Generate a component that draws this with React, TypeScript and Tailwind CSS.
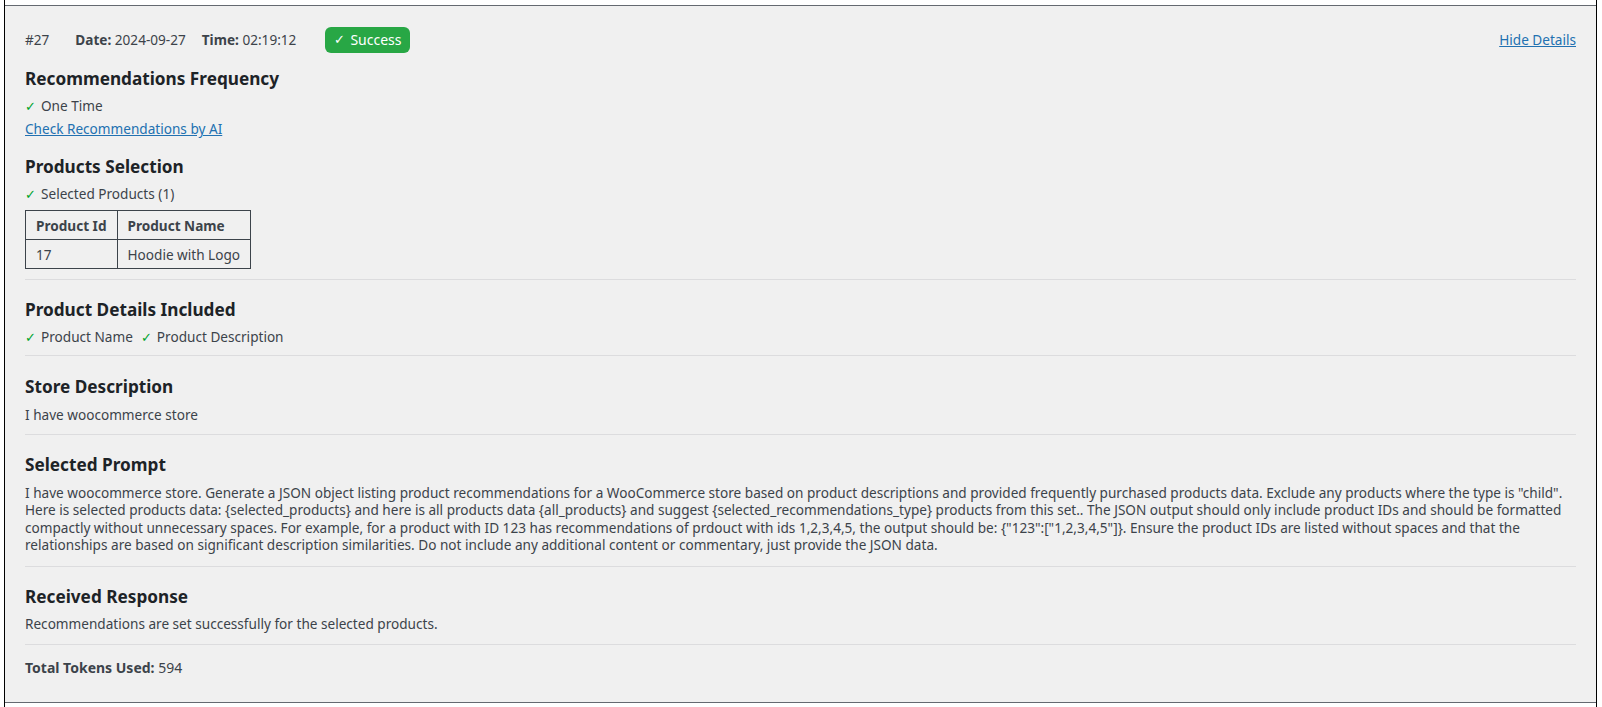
import React from "react";

const font = { fontFamily: '"Noto Sans", "Open Sans", sans-serif' };

function Check() {
  return <span className="text-[#00a32a] text-[13px] mr-[5px]">✓</span>;
}

function Heading({ children }: { children: React.ReactNode }) {
  return <h3 className="text-[17.2px] leading-[22px] font-bold text-[#1d2327]">{children}</h3>;
}

function Divider() {
  return <div className="h-px bg-[#dcdcde]" />;
}

const prompt =
  'I have woocommerce store. Generate a JSON object listing product recommendations for a WooCommerce store based on product descriptions and provided frequently purchased products data. Exclude any products where the type is "child". Here is selected products data: {selected_products} and here is all products data {all_products} and suggest {selected_recommendations_type} products from this set.. The JSON output should only include product IDs and should be formatted compactly without unnecessary spaces. For example, for a product with ID 123 has recommendations of prdouct with ids 1,2,3,4,5, the output should be: {"123":["1,2,3,4,5"]}. Ensure the product IDs are listed without spaces and that the relationships are based on significant description similarities. Do not include any additional content or commentary, just provide the JSON data.';

export default function App() {
  return (
    <div className="h-[707px] bg-white pl-[4px] pr-[5px]" style={font}>
      <div className="h-full border-x border-black pt-[5px] pb-[4px] flex flex-col">
        <div className="flex-1 bg-[#f0f0f0] border-y border-[#646970] px-[20px] text-[13.6px] leading-[17.4px] text-[#3c434a]">
          {/* header row */}
          <div className="flex items-center justify-between mt-[21px] h-[26px]">
            <div className="flex items-center">
              <span className="mr-[26px]">#27</span>
              <span className="mr-[16px]">
                <b className="font-bold">Date:</b> 2024-09-27
              </span>
              <span className="mr-[29px]">
                <b className="font-bold">Time:</b> 02:19:12
              </span>
              <span className="h-[26px] px-[9px] rounded-[6px] bg-[#28a745] text-white text-[14px] flex items-center">
                <span className="text-[12.5px] mr-[5px]">✓</span>Success
              </span>
            </div>
            <a className="text-[#2271b1] underline">Hide Details</a>
          </div>

          <div className="mt-[15px]">
            <Heading>Recommendations Frequency</Heading>
            <p className="mt-[7px]">
              <Check />One Time
            </p>
            <p className="mt-[5px]">
              <a className="text-[#2271b1] underline">Check Recommendations by AI</a>
            </p>
          </div>

          <div className="mt-[18px]">
            <Heading>Products Selection</Heading>
            <p className="mt-[7px]">
              <Check />Selected Products (1)
            </p>
            <table className="mt-[7px] border-collapse border border-[#3c434a]">
              <thead>
                <tr>
                  <th className="border border-[#3c434a] px-[10px] h-[29px] text-left font-bold">Product Id</th>
                  <th className="border border-[#3c434a] px-[10px] h-[29px] text-left font-bold">Product Name</th>
                </tr>
              </thead>
              <tbody>
                <tr>
                  <td className="border border-[#3c434a] px-[10px] h-[29px]">17</td>
                  <td className="border border-[#3c434a] px-[10px] h-[29px]">Hoodie with Logo</td>
                </tr>
              </tbody>
            </table>
          </div>

          <div className="mt-[10px]">
            <Divider />
          </div>

          <div className="mt-[19px]">
            <Heading>Product Details Included</Heading>
            <p className="mt-[7px]">
              <Check />Product Name
              <span className="ml-[8px]">
                <Check />Product Description
              </span>
            </p>
          </div>

          <div className="mt-[8px]">
            <Divider />
          </div>

          <div className="mt-[20px]">
            <Heading>Store Description</Heading>
            <p className="mt-[8px]">I have woocommerce store</p>
          </div>

          <div className="mt-[11px]">
            <Divider />
          </div>

          <div className="mt-[19px]">
            <Heading>Selected Prompt</Heading>
            <p className="mt-[8px]">{prompt}</p>
          </div>

          <div className="mt-[12px]">
            <Divider />
          </div>

          <div className="mt-[19px]">
            <Heading>Received Response</Heading>
            <p className="mt-[7px]">Recommendations are set successfully for the selected products.</p>
          </div>

          <div className="mt-[12px]">
            <Divider />
          </div>

          <p className="mt-[14px] text-[14px] leading-[18px]">
            <b className="font-bold">Total Tokens Used:</b> 594
          </p>
        </div>
      </div>
    </div>
  );
}
